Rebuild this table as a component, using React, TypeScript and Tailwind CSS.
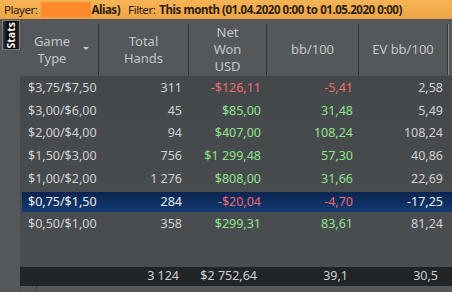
import React from "react";

type Row = { game: string; hands: string; net: string; bb: string; ev: string; netNeg?: boolean; bbNeg?: boolean; sel?: boolean; h: string };

const rows: Row[] = [
  { game: "$3,75/$7,50", hands: "311", net: "-$126,11", bb: "-5,41", ev: "2,58", netNeg: true, bbNeg: true, h: "h-[23px]" },
  { game: "$3,00/$6,00", hands: "45", net: "$85,00", bb: "31,48", ev: "5,49", h: "h-[22px]" },
  { game: "$2,00/$4,00", hands: "94", net: "$407,00", bb: "108,24", ev: "108,24", h: "h-[23px]" },
  { game: "$1,50/$3,00", hands: "756", net: "$1 299,48", bb: "57,30", ev: "40,86", h: "h-[23px]" },
  { game: "$1,00/$2,00", hands: "1 276", net: "$808,00", bb: "31,66", ev: "22,69", h: "h-[23px]" },
  { game: "$0,75/$1,50", hands: "284", net: "-$20,04", bb: "-4,70", ev: "-17,25", netNeg: true, bbNeg: true, sel: true, h: "h-[22px]" },
  { game: "$0,50/$1,00", hands: "358", net: "$299,31", bb: "83,61", ev: "81,24", h: "h-[23px]" },
];

const cols = "grid grid-cols-[79px_90px_78px_92px_89px_3px]";

export default function App() {
  return (
    <div
      className="w-[452px] h-[292px] flex flex-col overflow-hidden bg-[#55585b]"
      style={{ fontFamily: '"Noto Sans", "Open Sans", sans-serif' }}
    >
      {/* top filter bar */}
      <div className="h-[19px] flex items-center bg-gradient-to-b from-[#f6b456] to-[#eea443] text-[11.5px] tracking-[-0.45px] text-[#2b2016] pl-[4px] whitespace-nowrap leading-none">
        <span>Player:</span>
        <span className="ml-[4px] w-[50px] h-[15px] bg-[#ff8a2b]" />
        <span className="font-bold">Alias)</span>
        <span className="ml-[8px]">Filter:</span>
        <span className="ml-[4px] font-bold">This month (01.04.2020 0:00 to 01.05.2020 0:00)</span>
      </div>

      <div className="flex-1 flex">
        {/* left strip */}
        <div className="w-[21px] flex flex-col items-start pt-[1px] pl-[2px]">
          <div className="w-[18px] h-[30px] border border-[#7a7c7e] bg-gradient-to-r from-[#3a3a3a] via-black to-[#2a2a2a] flex items-center justify-center">
            <span className="text-white text-[10.5px] font-bold -rotate-90 leading-none">Stats</span>
          </div>
        </div>

        {/* main */}
        <div className="flex-1 flex flex-col">
          {/* header */}
          <div className={`${cols} h-[57px] text-[13px] leading-[17px] text-[#c3c5c7] bg-[#55585b]`}>
            <div className="relative flex items-center justify-center pr-[14px] border-r border-[#323537] my-[5px]">
              <div className="text-center">Game<br />Type</div>
              <div className="absolute right-[9px] top-[23px] w-0 h-0 border-l-[3px] border-r-[3px] border-t-[3px] border-l-transparent border-r-transparent border-t-[#c3c5c7]" />
            </div>
            <div className="flex items-center justify-center border-r border-[#323537] my-[5px]">
              <div className="text-center">Total<br />Hands</div>
            </div>
            <div className="flex items-center justify-center border-r border-[#323537] my-[5px]">
              <div className="text-center">Net<br />Won<br />USD</div>
            </div>
            <div className="flex items-center justify-center border-r border-[#323537] my-[5px]">
              <div className="text-center">bb/100</div>
            </div>
            <div className="flex items-center justify-center border-r border-[#323537] my-[5px]">
              <div className="text-center">EV bb/100</div>
            </div>
            <div className="border-l border-[#86888a] my-[5px]" />
          </div>

          {/* body */}
          <div className="flex-1 bg-gradient-to-b from-[#45484b] to-[#4b4e51] pt-[1px] text-[12.5px] text-[#cfd0d1]">
            {rows.map((r) => (
              <div key={r.game} className={`${r.h} flex items-center pl-[2px]`}>
                <div
                  className={`${cols} w-full h-[20px] items-center ${
                    r.sel ? "bg-gradient-to-b from-[#0a2451] to-[#123a72] text-[#eef0f2]" : ""
                  }`}
                >
                  <div className="pl-[6px]">{r.game}</div>
                  <div className="text-right pr-[9px]">{r.hands}</div>
                  <div className={`text-right pr-[8px] ${r.netNeg ? "text-[#ee6b6b]" : "text-[#8ee38a]"}`}>{r.net}</div>
                  <div className={`text-right pr-[8px] ${r.bbNeg ? "text-[#ee6b6b]" : "text-[#8ee38a]"}`}>{r.bb}</div>
                  <div className="text-right pr-[7px]">{r.ev}</div>
                  <div />
                </div>
              </div>
            ))}
          </div>

          {/* footer totals */}
          <div className={`${cols} h-[19px] items-center bg-[#222528] text-[12.5px] text-[#cfd0d1]`}>
            <div />
            <div className="text-right pr-[10px]">3 124</div>
            <div className="text-right pr-[10px]">$2 752,64</div>
            <div className="text-right pr-[11px]">39,1</div>
            <div className="text-right pr-[10px]">30,5</div>
            <div />
          </div>
          <div className="h-[6px] flex bg-[#55585b] border-l border-[#4a4d50]">
            <div className="w-[16px] border-r border-[#3e4143]" />
          </div>
        </div>
      </div>
    </div>
  );
}
